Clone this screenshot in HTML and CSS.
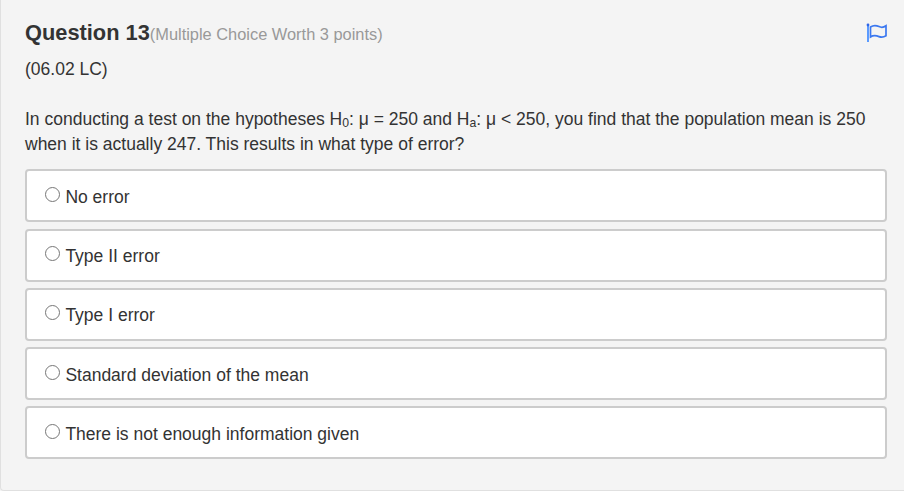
FILE: index.html
```html
<!DOCTYPE html>
<html lang="en">
<head>
    <meta charset="UTF-8">
    <meta name="viewport" content="width=device-width, initial-scale=1.0">
    <title>Question 13</title>
    <link rel="stylesheet" href="styles.css">
</head>
<body>
    <form class="question">
        <div class="header">
            <h2>Question 13</h2>
            <span class="worth">(Multiple Choice Worth 3 points)</span>
            <svg class="flag" width="24" height="22" viewBox="0 0 24 22" fill="none" stroke="#3b78f0" stroke-width="1.7">
                <path d="M4 3v17" stroke="#5b9bff" stroke-width="2"/>
                <circle cx="4" cy="3" r="1.4" fill="#2f66e8" stroke="none"/>
                <path d="M6.500 5c3-2 6-1.600 8.500-.4s4.500 1 7-.8v10c-2.500 1.600-4.500 1.800-7 .8s-5.500-1.500-8.500.3z"/>
            </svg>
        </div>
        <p class="code">(06.02 LC)</p>
        <p class="text">In conducting a test on the hypotheses H<sub>0</sub>: μ = 250 and H<sub>a</sub>: μ &lt; 250, you find that the population mean is 250 when it is actually 247. This results in what type of error?</p>

        <div class="answers">
            <label class="answer"><input type="radio" name="answer"><span>No error</span></label>
            <label class="answer"><input type="radio" name="answer"><span>Type II error</span></label>
            <label class="answer"><input type="radio" name="answer"><span>Type I error</span></label>
            <label class="answer"><input type="radio" name="answer"><span>Standard deviation of the mean</span></label>
            <label class="answer"><input type="radio" name="answer"><span>There is not enough information given</span></label>
        </div>
    </form>
</body>
</html>
```
FILE: styles.css
```css
* {
    box-sizing: border-box;
}
body {
    margin: 0;
    font-family: "Liberation Sans", Arial, sans-serif;
    font-size: 17.5px;
    line-height: 25px;
    color: #333;
    background-color: #f4f4f4;
}
.question {
    height: 491px;
    padding: 19px 17px 0 24px;
    border: 1px solid #e0e0e0;
    border-top: none;
    border-right: none;
    border-radius: 0 0 0 4px;
}
.header {
    display: flex;
    align-items: center;
    height: 26px;
}
h2 {
    margin: 0;
    font-size: 21.8px;
    line-height: 25px;
}
.worth {
    margin-top: 4px;
    font-size: 16.4px;
    color: #999;
}
.flag {
    margin: 1px -1px 0 auto;
}
p {
    margin: 0;
}
.code {
    margin-top: 12px;
}
.text {
    margin-top: 25px;
}
sub {
    font-size: 70%;
    line-height: 0;
    position: relative;
    vertical-align: baseline;
    bottom: -0.2em;
}
.answers {
    display: flex;
    flex-direction: column;
    gap: 6.25px;
    margin-top: 12.4px;
}
.answer {
    display: flex;
    height: 53px;
    padding: 13.4px 18px 0;
    background-color: #fff;
    border: 2px solid #ccc;
    border-radius: 4px;
}
input {
    width: 15px;
    height: 15px;
    margin: 2.1px 5.4px 0 0;
}
```
